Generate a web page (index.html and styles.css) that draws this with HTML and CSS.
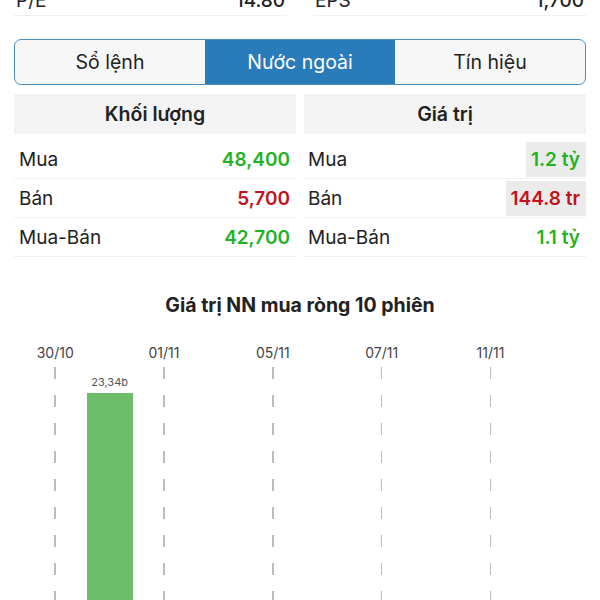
FILE: index.html
```html
<!DOCTYPE html>
<html lang="vi">
<head>
    <meta charset="UTF-8">
    <meta name="viewport" content="width=device-width, initial-scale=1.0">
    <title>Nước ngoài</title>
    <link rel="stylesheet" href="styles.css">
</head>
<body>

    <div class="stats">
        <div class="stat-row"><span>P/E</span> <strong>14.80</strong></div>
        <div class="stat-row"><span>EPS</span> <strong>1,700</strong></div>
    </div>

    <div class="tabs">
        <div class="tab">Sổ lệnh</div>
        <div class="tab active">Nước ngoài</div>
        <div class="tab">Tín hiệu</div>
    </div>

    <div class="tables">
        <div class="table">
            <div class="table-head">Khối lượng</div>
            <div class="row"><span>Mua</span> <strong class="up">48,400</strong></div>
            <div class="row"><span>Bán</span> <strong class="down">5,700</strong></div>
            <div class="row"><span>Mua-Bán</span> <strong class="up">42,700</strong></div>
        </div>
        <div class="table">
            <div class="table-head">Giá trị</div>
            <div class="row"><span>Mua</span> <strong class="up boxed">1.2 tỷ</strong></div>
            <div class="row"><span>Bán</span> <strong class="down boxed">144.8 tr</strong></div>
            <div class="row"><span>Mua-Bán</span> <strong class="up">1.1 tỷ</strong></div>
        </div>
    </div>

    <div class="chart">
        <h3>Giá trị NN mua ròng 10 phiên</h3>
        <div class="slots">
            <div class="slot tick"><div class="axis">30/10</div><div class="plot"></div></div>
            <div class="slot"><div class="axis"></div><div class="plot">
                <div class="bar-label">23,34b</div>
                <div class="bar" style="height: 229px"></div>
            </div></div>
            <div class="slot tick"><div class="axis">01/11</div><div class="plot"></div></div>
            <div class="slot"><div class="axis"></div><div class="plot"></div></div>
            <div class="slot tick"><div class="axis">05/11</div><div class="plot"></div></div>
            <div class="slot"><div class="axis"></div><div class="plot"></div></div>
            <div class="slot tick"><div class="axis">07/11</div><div class="plot"></div></div>
            <div class="slot"><div class="axis"></div><div class="plot"></div></div>
            <div class="slot tick"><div class="axis">11/11</div><div class="plot"></div></div>
            <div class="slot"><div class="axis"></div><div class="plot"></div></div>
        </div>
    </div>

</body>
</html>
```

FILE: styles.css
```css
body {
    font-family: Inter, "Noto Sans", sans-serif;
    color: #222;
    background: #fff;
    margin: 0;
    padding: 0 14px;
    overflow: hidden;
}
.stats {
    display: grid;
    grid-template-columns: 1fr 1fr;
    gap: 26px;
    margin-top: -11px;
}
.stat-row {
    display: flex;
    justify-content: space-between;
    font-size: 19px;
    line-height: 24px;
    padding: 0 2px 2px 2px;
    border-bottom: 1px solid #f0f0f0;
}
.stat-row strong {
    font-weight: 500;
}
.tabs {
    display: flex;
    margin-top: 23px;
    height: 44px;
    border: 1.5px solid #4b8fc2;
    border-radius: 7px;
    overflow: hidden;
    background: #f7f7f7;
}
.tab {
    flex: 1;
    display: flex;
    align-items: center;
    justify-content: center;
    font-size: 19.5px;
}
.tab.active {
    background: #2a7bb9;
    color: #fff;
}
.tables {
    display: grid;
    grid-template-columns: 1fr 1fr;
    gap: 8px;
    margin-top: 9px;
}
.table-head {
    background: #f3f3f3;
    height: 40px;
    line-height: 40px;
    text-align: center;
    font-size: 19.5px;
    font-weight: 600;
    margin-bottom: 6px;
}
.row {
    display: flex;
    justify-content: space-between;
    align-items: center;
    height: 38px;
    padding: 0 6px 0 5px;
    border-bottom: 1px solid #f0f0f0;
    font-size: 19px;
}
.tables .table:last-child .row {
    padding-left: 4px;
    padding-right: 6px;
}
.row strong {
    font-weight: 600;
}
.up {
    color: #1fb324;
}
.down {
    color: #c3121b;
}
.boxed {
    background: #ebebeb;
    padding: 6px 6px 6px 5px;
    margin-right: -6px;
}
.chart {
    margin: 36px 14px 0 14px;
}
.chart h3 {
    margin: 0;
    text-align: center;
    font-size: 19.5px;
    line-height: 24px;
    font-weight: 700;
}
.slots {
    display: flex;
    margin-top: 27px;
}
.slot {
    flex: 1;
    display: flex;
    flex-direction: column;
    align-items: center;
}
.axis {
    height: 18px;
    line-height: 18px;
    font-size: 14px;
    color: #444;
}
.plot {
    position: relative;
    width: 100%;
    height: 260px;
    display: flex;
    flex-direction: column;
    justify-content: flex-end;
    align-items: center;
}
.tick .plot::before {
    content: "";
    position: absolute;
    top: 5px;
    bottom: 0;
    left: calc(50% - 0.75px);
    width: 1.5px;
    background: repeating-linear-gradient(to bottom, #bdbdbd 0 12px, transparent 12px 28px);
}
.bar-label {
    font-size: 11px;
    line-height: 14px;
    color: #555;
    margin-bottom: 4px;
}
.bar {
    width: 46px;
    background: #6dbd6a;
}
```
